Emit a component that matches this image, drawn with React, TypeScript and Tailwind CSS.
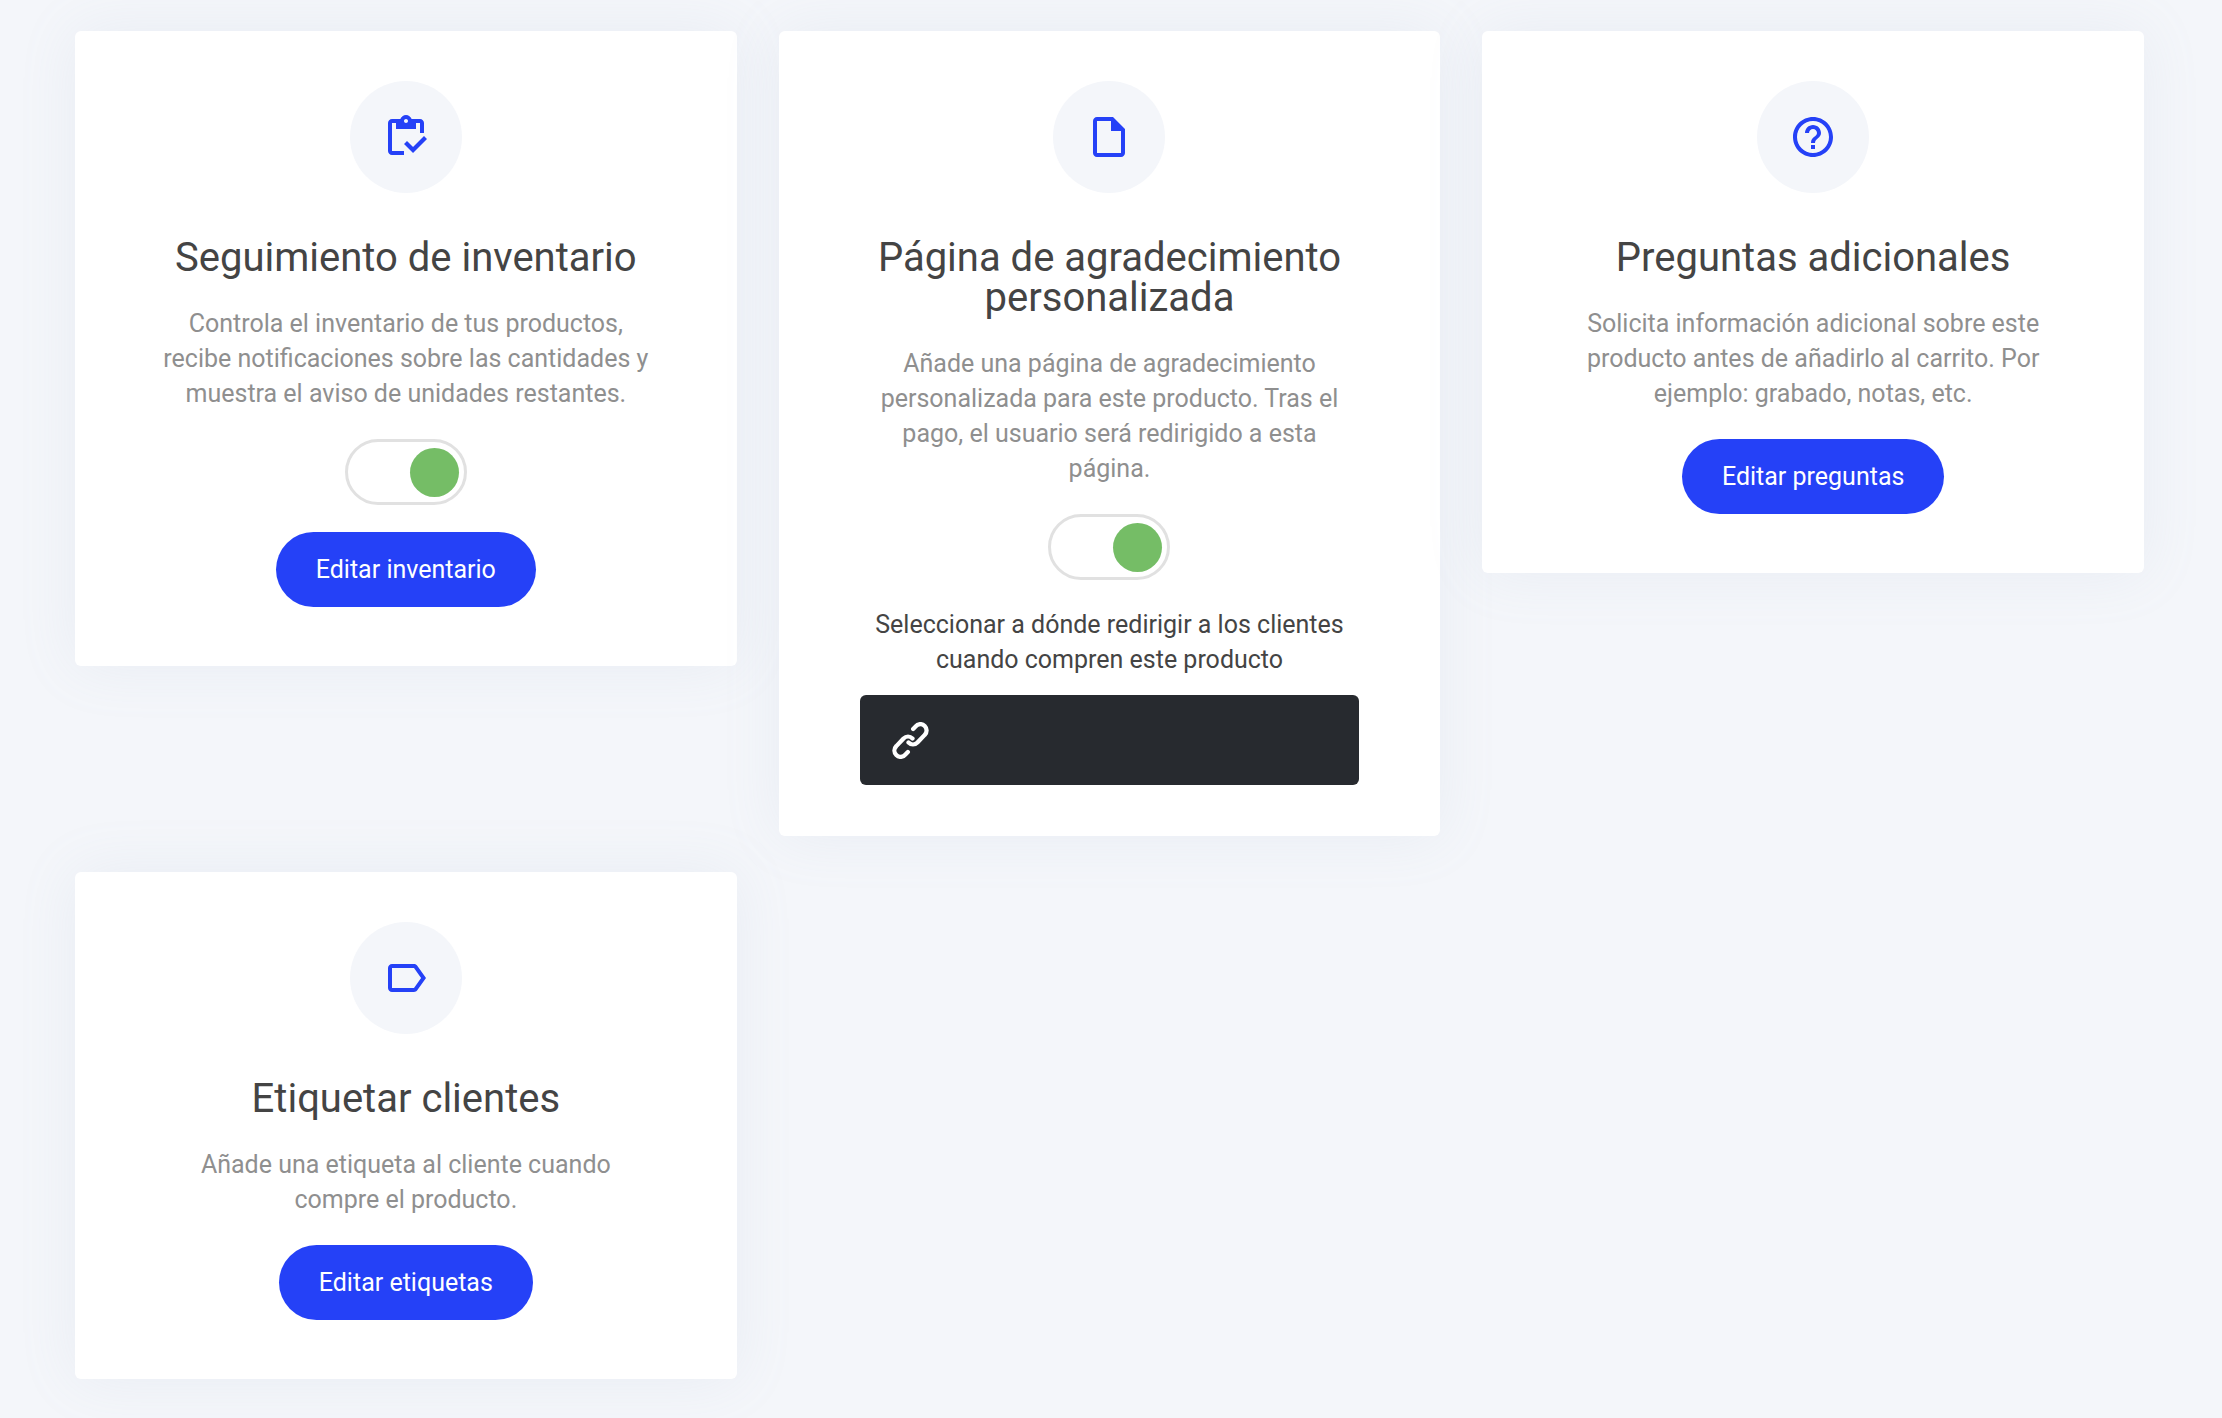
import type { ReactNode } from "react";
import { useState } from "react";
import {
  MdHelpOutline,
  MdLabelOutline,
  MdOutlineInsertDriveFile,
  MdOutlineInventory,
} from "react-icons/md";

type CardProps = {
  icon: ReactNode;
  title: string;
  description: string;
  children: ReactNode;
};

function Card({ icon, title, description, children }: CardProps) {
  return (
    <section className="flex flex-col items-center rounded-md bg-white px-[81px] pt-[50px] pb-[51px] text-center text-[25px] leading-[35px] text-[#8f8f8f] shadow-[0_0_60px_rgba(150,165,190,0.11)]">
      <div className="mb-[45px] flex size-28 items-center justify-center rounded-full bg-[#f4f6fa] text-5xl text-[#2541f7]">
        {icon}
      </div>
      <h2 className="mb-7 text-[40px] leading-10 text-[#444444]">{title}</h2>
      <p className="mb-7">{description}</p>
      {children}
    </section>
  );
}

function Toggle({ label }: { label: string }) {
  const [on, setOn] = useState(true);
  return (
    <label className="mb-[27px] block cursor-pointer">
      <input
        type="checkbox"
        role="switch"
        aria-label={label}
        checked={on}
        onChange={() => setOn(!on)}
        className="peer sr-only"
      />
      <span className="flex h-[66px] w-[122px] items-center rounded-full border-[3px] border-[#e1e1e1] bg-white px-[5px] peer-checked:justify-end peer-checked:*:bg-[#75bd66]">
        <span className="size-[49px] rounded-full bg-[#c4c4c4]" />
      </span>
    </label>
  );
}

function EditButton({ children }: { children: ReactNode }) {
  return (
    <button
      type="button"
      className="mb-2 h-[75px] cursor-pointer rounded-full bg-[#2541f7] px-10 text-white"
    >
      {children}
    </button>
  );
}

function ChainIcon() {
  return (
    <svg
      viewBox="36 41 112 112"
      className="size-[37px] shrink-0"
      fill="none"
      stroke="currentColor"
      strokeWidth="13"
      strokeLinecap="round"
      strokeLinejoin="round"
      aria-hidden="true"
    >
      <path d="M100 62L106 56C116 44 128 46 135 53C142 60 143 72 135 80L113 103C105 111 94 111 86 103" />
      <path d="M84 132L78 138C68 150 56 148 49 141C42 134 41 122 49 114L71 91C79 83 90 83 98 91" />
    </svg>
  );
}

export default function App() {
  return (
    <main className="min-h-screen bg-[#f4f6fa] pt-[31px] pr-[78px] pb-9 pl-[75px] font-[Roboto,sans-serif]">
      <div className="grid grid-cols-3 items-start gap-x-[42px] gap-y-9">
        <Card
          icon={<MdOutlineInventory />}
          title="Seguimiento de inventario"
          description="Controla el inventario de tus productos, recibe notificaciones sobre las cantidades y muestra el aviso de unidades restantes."
        >
          <Toggle label="Seguimiento de inventario" />
          <EditButton>Editar inventario</EditButton>
        </Card>

        <Card
          icon={<MdOutlineInsertDriveFile />}
          title="Página de agradecimiento personalizada"
          description="Añade una página de agradecimiento personalizada para este producto. Tras el pago, el usuario será redirigido a esta página."
        >
          <Toggle label="Página de agradecimiento personalizada" />
          <p id="redirect-label" className="mb-[18px] text-[#444444]">
            Seleccionar a dónde redirigir a los clientes cuando compren este
            producto
          </p>
          <button
            type="button"
            aria-labelledby="redirect-label"
            className="flex h-[90px] w-full cursor-pointer items-center rounded-md bg-[#272a2f] px-8 text-white"
          >
            <ChainIcon />
          </button>
        </Card>

        <Card
          icon={<MdHelpOutline />}
          title="Preguntas adicionales"
          description="Solicita información adicional sobre este producto antes de añadirlo al carrito. Por ejemplo: grabado, notas, etc."
        >
          <EditButton>Editar preguntas</EditButton>
        </Card>

        <Card
          icon={<MdLabelOutline />}
          title="Etiquetar clientes"
          description="Añade una etiqueta al cliente cuando compre el producto."
        >
          <EditButton>Editar etiquetas</EditButton>
        </Card>
      </div>
    </main>
  );
}
